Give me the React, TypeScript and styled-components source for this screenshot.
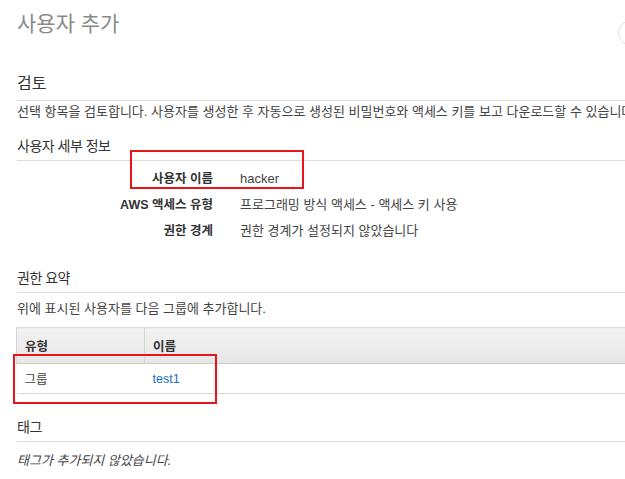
import styled, { createGlobalStyle } from "styled-components";

const GlobalStyle = createGlobalStyle`
  html, body {
    margin: 0;
    padding: 0;
    overflow: hidden;
    background: #ffffff;
  }
  body {
    font-family: "Liberation Sans", "Noto Sans CJK KR", sans-serif;
    color: #444444;
  }
`;

interface Detail {
  label: string;
  value: string;
}

const details: Detail[] = [
  { label: "사용자 이름", value: "hacker" },
  { label: "AWS 액세스 유형", value: "프로그래밍 방식 액세스 - 액세스 키 사용" },
  { label: "권한 경계", value: "권한 경계가 설정되지 않았습니다" },
];

export default function App() {
  return (
    <>
      <GlobalStyle />
      <Page>
        <Header>
          <Title>사용자 추가</Title>
          <HelpButton />
        </Header>

        <ReviewTitle>검토</ReviewTitle>
        <Description $top={3}>
          선택 항목을 검토합니다. 사용자를 생성한 후 자동으로 생성된 비밀번호와 액세스 키를 보고
          다운로드할 수 있습니다.
        </Description>

        <SectionTitle $top={17}>사용자 세부 정보</SectionTitle>
        <DetailList>
          {details.map((d) => (
            <DetailRow key={d.label}>
              <DetailLabel>{d.label}</DetailLabel>
              <DetailValue>{d.value}</DetailValue>
            </DetailRow>
          ))}
        </DetailList>

        <SectionTitle $top={25}>권한 요약</SectionTitle>
        <Description $top={8}>위에 표시된 사용자를 다음 그룹에 추가합니다.</Description>

        <Table>
          <thead>
            <tr>
              <HeadCell $width={111}>유형</HeadCell>
              <HeadCell>이름</HeadCell>
            </tr>
          </thead>
          <tbody>
            <tr>
              <BodyCell>그룹</BodyCell>
              <BodyCell>
                <Link href="#">test1</Link>
              </BodyCell>
            </tr>
          </tbody>
        </Table>

        <SectionTitle $top={24}>태그</SectionTitle>
        <EmptyNote>태그가 추가되지 않았습니다.</EmptyNote>

        <Highlight $left={130} $top={150} $width={174} $height={39} />
        <Highlight $left={13} $top={354} $width={204} $height={50} />
      </Page>
    </>
  );
}

const Page = styled.div`
  position: relative;
  width: 627px;
  padding-left: 17px;
`;

const Header = styled.div`
  display: flex;
  justify-content: space-between;
  align-items: flex-start;
  box-sizing: border-box;
  height: 38px;
  padding-top: 10px;
`;

const Title = styled.h1`
  margin: 0;
  font-size: 21px;
  line-height: 28px;
  font-weight: 400;
  color: #8a8a8a;
`;

const HelpButton = styled.div`
  flex: none;
  width: 24px;
  height: 24px;
  margin-top: 10px;
  border: 1px solid #e2e2e2;
  border-radius: 50%;
`;

const ReviewTitle = styled.h2`
  margin: 35px 0 0;
  padding-bottom: 5px;
  font-size: 16px;
  line-height: 22px;
  font-weight: 400;
  color: #333333;
  border-bottom: 1px solid #dddddd;
`;

const SectionTitle = styled.h3<{ $top: number }>`
  margin: ${(p) => p.$top}px 0 0;
  padding-bottom: 5px;
  font-size: 14px;
  line-height: 18px;
  font-weight: 400;
  letter-spacing: -0.5px;
  color: #333333;
  border-bottom: 1px solid #dddddd;
`;

const Description = styled.p<{ $top: number }>`
  margin: ${(p) => p.$top}px 0 0;
  font-size: 13px;
  line-height: 16px;
  color: #444444;
  white-space: nowrap;
`;

const DetailList = styled.div`
  display: flex;
  flex-direction: column;
  margin-top: 5px;
`;

const DetailRow = styled.div`
  display: grid;
  grid-template-columns: 196px 1fr;
  column-gap: 27px;
  line-height: 26px;
`;

const DetailLabel = styled.div`
  text-align: right;
  font-size: 12.5px;
  font-weight: 700;
  color: #333333;
`;

const DetailValue = styled.div`
  font-size: 13px;
  color: #444444;
  white-space: nowrap;
`;

const Table = styled.table`
  width: 100%;
  margin-top: 10px;
  margin-left: -1px;
  border-collapse: collapse;
  font-size: 12.5px;
`;

const HeadCell = styled.th<{ $width?: number }>`
  width: ${(p) => (p.$width ? `${p.$width}px` : "auto")};
  height: 35px;
  padding: 0 8px;
  text-align: left;
  font-weight: 700;
  color: #333333;
  background: linear-gradient(#f3f3f3, #e6e6e6);
  border-top: 1px solid #dcdcdc;
  border-left: 1px solid #d4d4d4;
  border-bottom: 1px solid #cccccc;
`;

const BodyCell = styled.td`
  height: 29px;
  padding: 0 8px;
  color: #444444;
  border-bottom: 1px solid #d9d9d9;
`;

const Link = styled.a`
  color: #1a6cc2;
  text-decoration: none;
`;

const EmptyNote = styled.p`
  margin: 11px 0 0;
  font-size: 13px;
  line-height: 16px;
  font-style: italic;
  color: #444444;
`;

const Highlight = styled.div<{ $left: number; $top: number; $width: number; $height: number }>`
  position: absolute;
  left: ${(p) => p.$left}px;
  top: ${(p) => p.$top}px;
  width: ${(p) => p.$width}px;
  height: ${(p) => p.$height}px;
  box-sizing: border-box;
  border: 2px solid #e8131b;
  pointer-events: none;
`;
